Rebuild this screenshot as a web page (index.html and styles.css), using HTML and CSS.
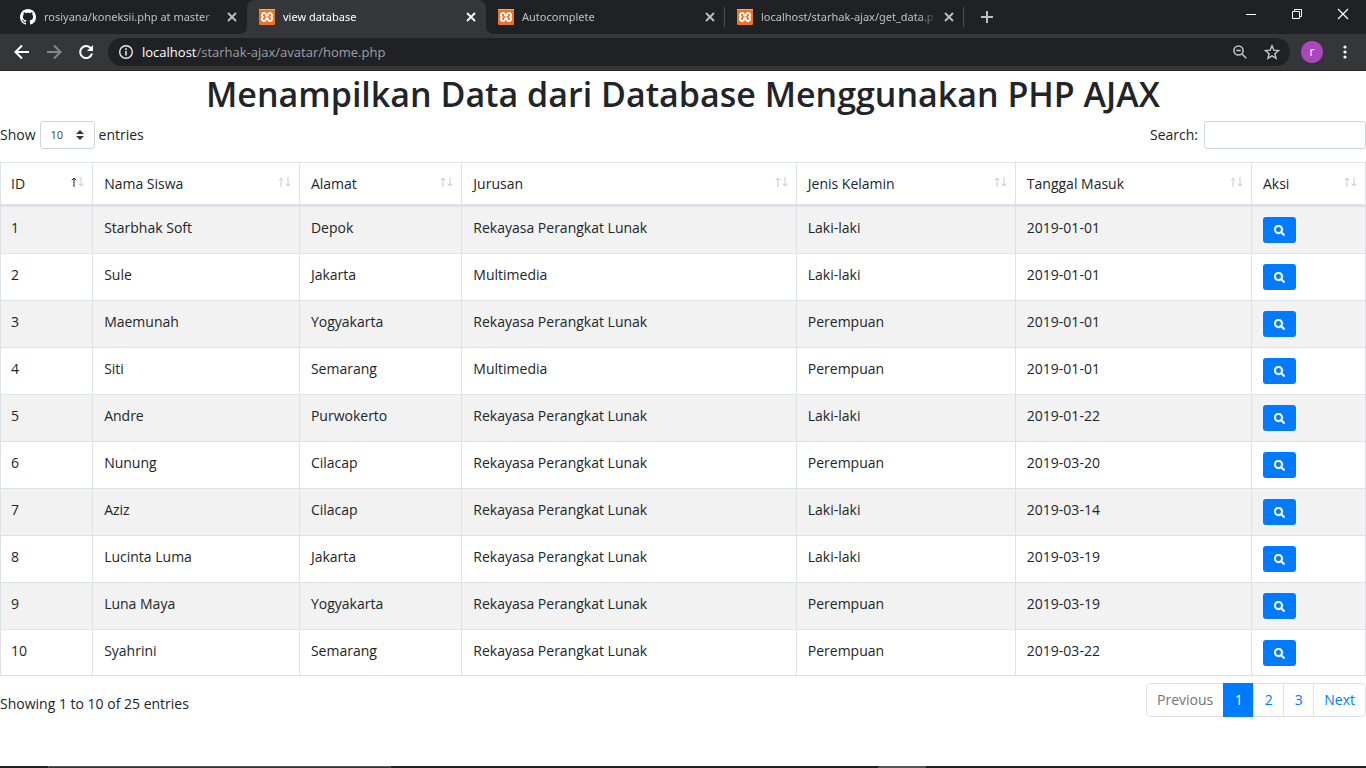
FILE: index.html
```
<!DOCTYPE html>
<html lang="id">
<head>
<meta charset="utf-8">
<meta name="viewport" content="width=device-width, initial-scale=1">
<title>view database</title>
<link rel="stylesheet" href="styles.css">
</head>
<body>
<svg class="sprite" aria-hidden="true">
  <symbol id="xampp" viewBox="0 0 16 16">
    <rect width="16" height="16" rx="1" fill="#ec7424"/>
    <rect width="16" height="1" fill="#f3ab7b"/>
    <path d="M4.200 4.200C5.800 3.600 6.900 4.400 6.900 5.700c0 .8.3 1 1.100 1s1.100-.2 1.100-1c0-1.300 1.100-2.100 2.700-1.500 1.700.6 1.600 2.800.4 3.800 1.200 1 1.300 3.200-.4 3.800-1.600.6-2.700-.2-2.700-1.500 0-.8-.3-1-1.100-1s-1.100.2-1.100 1c0 1.300-1.100 2.100-2.700 1.500-1.700-.6-1.600-2.800-.4-3.800-1.200-1-1.300-3.200.4-3.800z" fill="none" stroke="#fff" stroke-width="1.900"/>
  </symbol>
  <symbol id="close" viewBox="0 0 16 16"><path d="M4 4l8 8M12 4l-8 8" stroke="currentColor" stroke-width="1.800" fill="none"/></symbol>
  <symbol id="up" viewBox="0 0 6 10"><path d="M3 10V1M.7 3.300L3 1l2.300 2.300" fill="none" stroke="currentColor"/></symbol>
  <symbol id="down" viewBox="0 0 6 10"><path d="M3 0v9M.7 6.700L3 9l2.300-2.300" fill="none" stroke="currentColor"/></symbol>
  <symbol id="search" viewBox="0 0 512 512"><path fill="currentColor" stroke="currentColor" stroke-width="18" d="M505 442.700L405.300 343c-4.500-4.500-10.600-7-17-7H372c27.600-35.300 44-79.700 44-128C416 93.100 322.900 0 208 0S0 93.100 0 208s93.100 208 208 208c48.300 0 92.700-16.400 128-44v16.300c0 6.400 2.500 12.500 7 17l99.700 99.700c9.400 9.400 24.600 9.400 33.900 0l28.300-28.300c9.400-9.400 9.400-24.600.1-34zM208 336c-70.700 0-128-57.200-128-128 0-70.700 57.200-128 128-128 70.700 0 128 57.200 128 128 0 70.700-57.200 128-128 128z"/></symbol>
</svg>

<header class="browser">
  <div class="tabstrip">
    <div class="tab">
      <svg class="favicon" viewBox="0 0 16 16"><path fill="#fff" d="M8 0C3.580 0 0 3.580 0 8c0 3.540 2.290 6.530 5.470 7.590.4.070.55-.17.55-.38 0-.19-.01-.82-.01-1.490-2.010.37-2.530-.49-2.690-.94-.09-.23-.48-.94-.82-1.130-.28-.15-.68-.52-.01-.53.63-.01 1.080.58 1.230.82.72 1.210 1.870.87 2.330.66.070-.52.28-.87.51-1.070-1.780-.2-3.640-.89-3.640-3.950 0-.87.31-1.590.82-2.150-.08-.2-.36-1.020.08-2.120 0 0 .67-.21 2.200.82.64-.18 1.320-.27 2-.27s1.360.09 2 .27c1.530-1.040 2.200-.82 2.200-.82.44 1.100.16 1.920.08 2.120.51.56.82 1.270.82 2.150 0 3.070-1.870 3.750-3.650 3.950.29.25.54.73.54 1.480 0 1.070-.01 1.930-.01 2.200 0 .21.15.46.55.38A8.010 8.010 0 0 0 16 8c0-4.420-3.580-8-8-8z"/></svg>
      <span class="tab-title">rosiyana/koneksii.php at master</span>
      <button class="tab-close" aria-label="Close tab"><svg><use href="#close"/></svg></button>
    </div>
    <div class="tab active">
      <svg class="favicon"><use href="#xampp"/></svg>
      <span class="tab-title">view database</span>
      <button class="tab-close" aria-label="Close tab"><svg><use href="#close"/></svg></button>
    </div>
    <div class="tab divided">
      <svg class="favicon"><use href="#xampp"/></svg>
      <span class="tab-title">Autocomplete</span>
      <button class="tab-close" aria-label="Close tab"><svg><use href="#close"/></svg></button>
    </div>
    <div class="tab divided">
      <svg class="favicon"><use href="#xampp"/></svg>
      <span class="tab-title">localhost/starhak-ajax/get_data.p</span>
      <button class="tab-close" aria-label="Close tab"><svg><use href="#close"/></svg></button>
    </div>
    <button class="new-tab" aria-label="New tab"><svg viewBox="0 0 16 16"><path d="M8 2v12M2 8h12" stroke="currentColor" stroke-width="2"/></svg></button>
    <div class="window-controls">
      <button aria-label="Minimize"><svg viewBox="0 0 12 12"><path d="M1 6.500h10" stroke="#fff"/></svg></button>
      <button aria-label="Restore"><svg viewBox="0 0 12 12"><path d="M1.500 3.500h7v7h-7zM3.500 3.500v-2h7v7h-2" fill="none" stroke="#fff"/></svg></button>
      <button aria-label="Close"><svg viewBox="0 0 12 12"><path d="M1 1l10 10M11 1L1 11" stroke="#fff" stroke-width="1.200"/></svg></button>
    </div>
  </div>
  <div class="toolbar">
    <button class="nav" aria-label="Back"><svg viewBox="0 0 16 16"><path d="M15 8H2M8 1.500L1.500 8 8 14.500" fill="none" stroke="#fff" stroke-width="2"/></svg></button>
    <button class="nav dim" aria-label="Forward"><svg viewBox="0 0 16 16"><path d="M1 8h13M8 1.500L14.500 8 8 14.500" fill="none" stroke="currentColor" stroke-width="2"/></svg></button>
    <button class="nav" aria-label="Reload"><svg viewBox="0 0 16 16"><path d="M13.200 4.800A6 6 0 1 0 14 9.500" fill="none" stroke="#fff" stroke-width="2"/><path d="M15 1v6H9z" fill="#fff"/></svg></button>
    <div class="omnibox">
      <svg viewBox="0 0 16 16"><circle cx="8" cy="8" r="6.300" fill="none" stroke="#e8eaed" stroke-width="1.400"/><path d="M8 7v4.500M8 4.300v1.600" stroke="#e8eaed" stroke-width="1.600"/></svg>
      <span class="url"><b>localhost</b>/starhak-ajax/avatar/home.php</span>
      <button aria-label="Zoom"><svg viewBox="0 0 16 16"><circle cx="6.500" cy="6.500" r="4.600" fill="none" stroke="#c4c7ca" stroke-width="1.500"/><path d="M10 10l4.300 4.300M4.300 6.500h4.400" fill="none" stroke="#c4c7ca" stroke-width="1.500"/></svg></button>
      <button aria-label="Bookmark"><svg viewBox="0 0 16 16"><path d="M8 1.800l1.800 4.400 4.700.4-3.600 3.100 1.100 4.600L8 11.800l-4 2.500 1.100-4.600L1.500 6.600l4.700-.4z" fill="none" stroke="#c4c7ca" stroke-width="1.400"/></svg></button>
    </div>
    <button class="avatar" aria-label="Profile">r</button>
    <button class="menu" aria-label="Menu"><svg viewBox="0 0 16 16" fill="#fff"><circle cx="8" cy="3" r="1.600"/><circle cx="8" cy="8" r="1.600"/><circle cx="8" cy="13" r="1.600"/></svg></button>
  </div>
</header>

<main class="page">
  <h1>Menampilkan Data dari Database Menggunakan PHP AJAX</h1>
  <div class="controls">
    <label class="length">Show
      <span class="select-wrap"><select><option>10</option><option>25</option><option>50</option><option>100</option></select><svg viewBox="0 0 8 10"><path d="M4 0l4 4H0zM4 10L0 6h8z" fill="#343a40"/></svg></span>
      entries</label>
    <label class="filter">Search: <input type="search"></label>
  </div>
  <table>
    <colgroup><col class="c-id"><col class="c-name"><col class="c-city"><col class="c-major"><col class="c-sex"><col class="c-date"><col class="c-act"></colgroup>
    <thead><tr>
      <th><div>ID<span class="sort asc"><svg><use href="#up"/></svg><svg><use href="#down"/></svg></span></div></th>
      <th><div>Nama Siswa<span class="sort"><svg><use href="#up"/></svg><svg><use href="#down"/></svg></span></div></th>
      <th><div>Alamat<span class="sort"><svg><use href="#up"/></svg><svg><use href="#down"/></svg></span></div></th>
      <th><div>Jurusan<span class="sort"><svg><use href="#up"/></svg><svg><use href="#down"/></svg></span></div></th>
      <th><div>Jenis Kelamin<span class="sort"><svg><use href="#up"/></svg><svg><use href="#down"/></svg></span></div></th>
      <th><div>Tanggal Masuk<span class="sort"><svg><use href="#up"/></svg><svg><use href="#down"/></svg></span></div></th>
      <th><div>Aksi<span class="sort"><svg><use href="#up"/></svg><svg><use href="#down"/></svg></span></div></th>
    </tr></thead>
    <tbody>
      <tr><td>1</td><td>Starbhak Soft</td><td>Depok</td><td>Rekayasa Perangkat Lunak</td><td>Laki-laki</td><td>2019-01-01</td><td><button class="view" aria-label="Lihat"><svg><use href="#search"/></svg></button></td></tr>
      <tr><td>2</td><td>Sule</td><td>Jakarta</td><td>Multimedia</td><td>Laki-laki</td><td>2019-01-01</td><td><button class="view" aria-label="Lihat"><svg><use href="#search"/></svg></button></td></tr>
      <tr><td>3</td><td>Maemunah</td><td>Yogyakarta</td><td>Rekayasa Perangkat Lunak</td><td>Perempuan</td><td>2019-01-01</td><td><button class="view" aria-label="Lihat"><svg><use href="#search"/></svg></button></td></tr>
      <tr><td>4</td><td>Siti</td><td>Semarang</td><td>Multimedia</td><td>Perempuan</td><td>2019-01-01</td><td><button class="view" aria-label="Lihat"><svg><use href="#search"/></svg></button></td></tr>
      <tr><td>5</td><td>Andre</td><td>Purwokerto</td><td>Rekayasa Perangkat Lunak</td><td>Laki-laki</td><td>2019-01-22</td><td><button class="view" aria-label="Lihat"><svg><use href="#search"/></svg></button></td></tr>
      <tr><td>6</td><td>Nunung</td><td>Cilacap</td><td>Rekayasa Perangkat Lunak</td><td>Perempuan</td><td>2019-03-20</td><td><button class="view" aria-label="Lihat"><svg><use href="#search"/></svg></button></td></tr>
      <tr><td>7</td><td>Aziz</td><td>Cilacap</td><td>Rekayasa Perangkat Lunak</td><td>Laki-laki</td><td>2019-03-14</td><td><button class="view" aria-label="Lihat"><svg><use href="#search"/></svg></button></td></tr>
      <tr><td>8</td><td>Lucinta Luma</td><td>Jakarta</td><td>Rekayasa Perangkat Lunak</td><td>Laki-laki</td><td>2019-03-19</td><td><button class="view" aria-label="Lihat"><svg><use href="#search"/></svg></button></td></tr>
      <tr><td>9</td><td>Luna Maya</td><td>Yogyakarta</td><td>Rekayasa Perangkat Lunak</td><td>Perempuan</td><td>2019-03-19</td><td><button class="view" aria-label="Lihat"><svg><use href="#search"/></svg></button></td></tr>
      <tr><td>10</td><td>Syahrini</td><td>Semarang</td><td>Rekayasa Perangkat Lunak</td><td>Perempuan</td><td>2019-03-22</td><td><button class="view" aria-label="Lihat"><svg><use href="#search"/></svg></button></td></tr>
    </tbody>
  </table>
  <div class="summary">
    <p>Showing 1 to 10 of 25 entries</p>
    <nav class="pagination" aria-label="Halaman">
      <a class="disabled">Previous</a><a class="current" href="#">1</a><a href="#">2</a><a href="#">3</a><a href="#">Next</a>
    </nav>
  </div>
</main>
<footer class="taskbar"><span class="task-search"></span><span class="task-app"></span></footer>
</body>
</html>
```
FILE: styles.css
```
* { box-sizing: border-box; }
body {
  margin: 0;
  min-height: 100vh;
  display: flex;
  flex-direction: column;
  background: #fff;
  color: #212529;
  font: 14px/22px "Open Sans", "Noto Sans", sans-serif;
}
button {
  border: 0;
  padding: 0;
  background: none;
  color: inherit;
  font: inherit;
  display: grid;
  place-items: center;
}
svg { display: block; }
.sprite { position: absolute; width: 0; height: 0; }

/* Browser frame */
.browser { background: #35363a; border-bottom: 1px solid #28242a; }
.tabstrip {
  display: flex;
  height: 34px;
  padding-left: 8px;
  background: #202124;
  color: #bdc1c6;
  font: 11px/16px "Noto Sans", "Open Sans", sans-serif;
}
.tab {
  display: flex;
  align-items: center;
  width: 239px;
  padding: 0 7px 0 12px;
  position: relative;
}
.tab.active { background: #35363a; color: #fff; border-radius: 8px 8px 0 0; }
.tab.active::before, .tab.active::after {
  content: "";
  position: absolute;
  bottom: 0;
  width: 8px;
  height: 8px;
}
.tab.active::before { right: 100%; background: radial-gradient(circle at 0 0, #202124 8px, #35363a 8px); }
.tab.active::after { left: 100%; background: radial-gradient(circle at 100% 0, #202124 8px, #35363a 8px); }
.tab.divided { background: linear-gradient(#4d4e52, #4d4e52) right center / 1px 20px no-repeat; }
.favicon { width: 16px; height: 16px; flex: none; }
.tab-title {
  flex: 1;
  margin: 0 4px 0 8px;
  overflow: hidden;
  white-space: nowrap;
  mask-image: linear-gradient(to right, #000 90%, transparent);
}
.tab-close svg { width: 16px; height: 16px; }
.new-tab { width: 46px; }
.new-tab svg { width: 16px; height: 16px; }
.window-controls { display: flex; margin-left: auto; height: 28px; }
.window-controls button { width: 46px; }
.window-controls svg { width: 12px; height: 12px; }
.toolbar { display: flex; align-items: center; height: 36px; padding: 0 13px 0 6px; }
.nav { width: 32px; }
.nav svg { width: 16px; height: 16px; }
.nav.dim { color: #85868a; }
.omnibox {
  flex: 1;
  display: flex;
  align-items: center;
  height: 28px;
  margin-left: 6px;
  padding: 0 10px;
  gap: 16px;
  border-radius: 14px;
  background: #202124;
}
.omnibox svg { width: 16px; height: 16px; flex: none; }
.url { flex: 1; margin-left: -8px; color: #9aa0a6; font-size: 13px; line-height: 20px; }
.url b { color: #fff; font-weight: 400; }
.avatar {
  width: 22px;
  height: 22px;
  margin: 0 14px 0 11px;
  border-radius: 50%;
  background: #ab47bc;
  color: #fff;
  font-size: 12px;
  line-height: 16px;
}
.menu svg { width: 16px; height: 16px; }

/* Page */
.page { flex: 1; }
h1 { margin: 2px 0 5px; text-align: center; font-size: 34px; line-height: 43px; font-weight: 600; }
.controls { display: flex; justify-content: space-between; }
.controls label { display: flex; align-items: center; gap: 4px; height: 28px; }
.controls .filter { gap: 6px; }
.select-wrap { display: grid; align-items: center; width: 55px; }
.select-wrap > * { grid-area: 1 / 1; }
.select-wrap svg { width: 8px; height: 10px; justify-self: end; margin-right: 11px; pointer-events: none; }
.controls select, .controls input {
  appearance: none;
  height: 28px;
  border: 1px solid #ced4da;
  border-radius: 3px;
  background: #fff;
  color: #495057;
  font: 11px/18px "Noto Sans", "Open Sans", sans-serif;
}
.controls select { width: 100%; padding: 0 10px; }
.controls input { width: 162px; padding: 4px 7px; }
table {
  width: 100%;
  margin: 13px 0 7px;
  table-layout: fixed;
  border-collapse: separate;
  border-spacing: 0;
  border-top: 1px solid #dee2e6;
  border-right: 1px solid #dee2e6;
}
.c-id { width: 6.75%; }
.c-name { width: 15.15%; }
.c-city { width: 11.9%; }
.c-major { width: 24.5%; }
.c-sex { width: 16.05%; }
.c-date { width: 17.3%; }
.c-act { width: 8.35%; }
th, td { padding: 10px 11px; text-align: left; vertical-align: top; border: 0 solid #dee2e6; border-left-width: 1px; font-weight: 400; }
th:first-child, td:first-child { padding-left: 10px; }
th { border-bottom-width: 3px; padding-right: 8px; padding-bottom: 9px; }
th div { display: flex; justify-content: space-between; }
td { border-bottom-width: 1px; }
tbody tr:nth-child(odd) { background: #f2f2f2; }
tbody tr:last-child td { padding-bottom: 9px; }
.sort { display: flex; gap: 1px; margin-top: 4px; color: #c8c9ca; }
.sort svg { width: 6px; height: 10px; }
.sort.asc svg:first-child { color: #212529; }
.view { width: 33px; height: 26px; border-radius: 3px; background: #007bff; color: #fff; }
.view svg { width: 11px; height: 11px; }
.summary { display: flex; justify-content: space-between; }
.summary p { margin: 10px 0 0; }
.pagination { display: flex; }
.pagination a {
  min-width: 31px;
  padding: 5px 10px;
  border: 1px solid #dee2e6;
  margin-left: -1px;
  color: #007bff;
  text-align: center;
  text-decoration: none;
}
.pagination a:first-child { border-radius: 4px 0 0 4px; }
.pagination a:last-child { border-radius: 0 4px 4px 0; }
.pagination a.disabled { color: #6c757d; }
.pagination a.current { background: #007bff; border-color: #007bff; color: #fff; }
.taskbar { display: flex; height: 2px; padding-left: 48px; background: #222224; }
.task-search { width: 26%; border: 1px solid #555; border-bottom: 0; background: #333; }
.task-app { width: 48px; margin-left: 37%; background: #555; }
```
